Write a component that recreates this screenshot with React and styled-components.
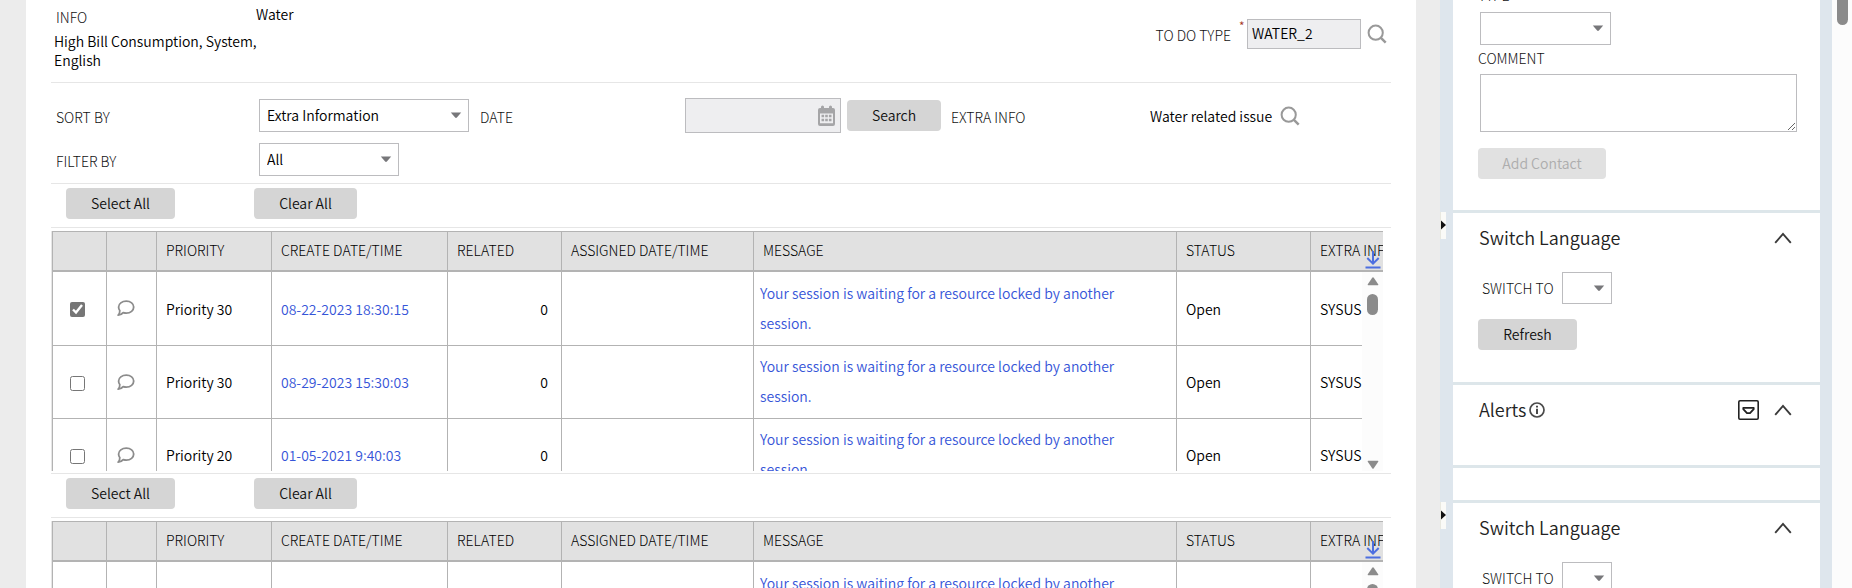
import React, { useId, useState } from "react";
import styled, { createGlobalStyle } from "styled-components";

const GlobalStyle = createGlobalStyle`
  *, *::before, *::after { box-sizing: border-box; }
  html, body { margin: 0; height: 100%; overflow: hidden; }
  body, button, input, select, textarea {
    font-family: "Noto Sans CJK SC", "Noto Sans", sans-serif;
    font-size: 14px;
    font-weight: 350;
    line-height: 20px;
    color: #000;
  }
`;

const Page = styled.div`
  display: flex;
  height: 100vh;
  overflow: hidden;
  background: #ececec;
`;

const Main = styled.main`
  flex: 1;
  min-width: 0;
  height: 100%;
  margin: 0 24px 0 26px;
  padding: 0 25px;
  overflow: hidden;
  background: #fff;
`;

const SummaryBar = styled.section`
  display: flex;
  align-items: flex-start;
  height: 83px;
  border-bottom: 1px solid #e6e6e6;
`;

const InfoBlock = styled.div`
  width: 205px;
  padding: 5px 0 0 3px;
`;

const InfoText = styled.p`
  width: 210px;
  margin: 5px 0 0;
  line-height: 19px;
`;

const SummaryValue = styled.span`
  padding-top: 4px;
`;

const TypeField = styled.div`
  display: flex;
  align-items: center;
  margin: 19px 4px 0 auto;
`;

const Label = styled.label`
  display: block;
  padding: ${(p) => p.$pad || "0"};
  font-weight: 300;
  color: #111;
  white-space: nowrap;
`;

const Required = styled.span`
  align-self: flex-start;
  width: 6px;
  margin: 0 2px 0 8px;
  font-size: 12px;
  line-height: 14px;
  color: #a3341b;
`;

const TextInput = styled.input`
  width: ${(p) => p.$width};
  height: ${(p) => p.$height};
  padding: 0 4px 2px;
  border: 1px solid #bcbcbf;
  border-radius: 0;
  background: #eeeef0;
  outline: none;
`;

const IconButton = styled.button`
  display: inline-flex;
  align-items: center;
  justify-content: center;
  margin: ${(p) => p.$margin || "0"};
  padding: 0;
  border: 0;
  background: none;
  line-height: 0;
  cursor: pointer;
`;

const FilterGrid = styled.form`
  display: grid;
  grid-template-columns: 208fr 221fr 205fr 266fr 199fr 241fr;
  align-items: center;
  row-gap: 10px;
  padding: 15px 0 7px;
  border-bottom: 1px solid #e6e6e6;
`;

const Inline = styled.div`
  display: flex;
  align-items: center;
  gap: ${(p) => p.$gap || "6px"};
`;

const Stack = styled.span`
  display: inline-grid;
  align-items: center;
  width: ${(p) => p.$width};
  & > * { grid-area: 1 / 1; }
  & > svg, & > button {
    justify-self: end;
    margin-right: ${(p) => p.$inset || "7px"};
  }
  & > svg { pointer-events: none; }
`;

const Select = styled.select`
  width: 100%;
  height: ${(p) => p.$height || "33px"};
  padding: 0 24px 2px 7px;
  appearance: none;
  border: 1px solid #bcbcbf;
  border-radius: 0;
  background: #fff;
  outline: none;
`;

const Button = styled.button`
  height: 31px;
  width: ${(p) => p.$width};
  padding: 0 0 2px;
  border: 0;
  border-radius: 4px;
  background: #d5d5d5;
  color: #111;
  cursor: pointer;
  &:disabled {
    background: #e1e1e1;
    color: #adadad;
    cursor: default;
  }
`;

const WorkSection = styled.section`
  padding-bottom: 2px;
  border-bottom: 1px solid #e6e6e6;
`;

const Toolbar = styled.div`
  display: flex;
  gap: 79px;
  padding: 4px 15px 8px;
  border-bottom: 1px solid #e6e6e6;
`;

const GridFrame = styled.div`
  position: relative;
  height: 240px;
  margin: 3px 8px 0 0;
  border-left: 1px solid #e6e6e6;
  overflow: hidden;
`;

const Table = styled.table`
  width: 100%;
  table-layout: fixed;
  border-collapse: separate;
  border-spacing: 0;
  border-left: 1px solid #b3b3b3;
`;

const Col = styled.col`
  width: ${(p) => p.$width};
`;

const Th = styled.th`
  height: 41px;
  padding: 0 0 2px 9px;
  border-top: 1px solid #b3b3b3;
  border-bottom: 2px solid #b3b3b3;
  border-right: 1px solid #b3b3b3;
  background: #e1e1e1;
  font-weight: 300;
  text-align: left;
  color: #000;
  white-space: nowrap;
  overflow: hidden;
  &:last-child { border-right: 0; }
`;

const Td = styled.td`
  height: 73px;
  padding: ${(p) => p.$pad || "0 0 0 9px"};
  border-right: 1px solid #b3b3b3;
  text-align: ${(p) => p.$align || "left"};
  line-height: ${(p) => p.$leading || "20px"};
  overflow: hidden;
  tr + tr > & { border-top: 1px solid #b3b3b3; }
  &:last-child { border-right: 0; }
`;

const Link = styled.a`
  color: #3655d8;
  text-decoration: none;
`;

const Checkbox = styled.input`
  display: block;
  width: 15px;
  height: 15px;
  margin: 2px auto 0;
  accent-color: #767676;
`;

const DownloadSlot = styled.div`
  position: absolute;
  top: 20px;
  right: 2px;
`;

const ScrollTrack = styled.div`
  position: absolute;
  top: 41px;
  right: 0;
  bottom: 0;
  display: flex;
  flex-direction: column;
  align-items: center;
  width: 21px;
  padding: 4px 0 1px;
  background: #fcfcfc;
`;

const ScrollThumb = styled.div`
  width: 11px;
  height: ${(p) => p.$height};
  margin-top: ${(p) => p.$top || "0"};
  margin-bottom: auto;
  border-radius: ${(p) => p.$radius || "6px"};
  background: #8b8b8b;
`;

const Rail = styled.div`
  flex: none;
  width: 13px;
  height: 100%;
  padding-top: 212px;
  background: #dee6ed;
  overflow: hidden;
`;

const RailHandle = styled.button`
  display: flex;
  align-items: center;
  width: 6px;
  height: 27px;
  margin: 0 0 263px;
  padding: 0 0 2px;
  border: 0;
  border-left: 1px solid #e8e8e0;
  background: #fafaf7;
  cursor: pointer;
`;

const Sidebar = styled.aside`
  display: flex;
  flex: none;
  flex-direction: column;
  gap: 3px;
  width: 379px;
  height: 100%;
  padding-right: 12px;
  overflow: hidden;
  background: linear-gradient(to left, #dee6ed 12px, #dde6ea 12px);
`;

const Card = styled.section`
  flex: none;
  height: ${(p) => p.$height};
  padding: ${(p) => p.$pad || "0 25px"};
  background: #fff;
  overflow: hidden;
`;

const CardHead = styled.header`
  display: flex;
  align-items: center;
  gap: 3px;
  height: 28px;
  margin-bottom: 20px;
  padding: 0 3px 0 1px;
`;

const CardTitle = styled.h2`
  margin: 0;
  padding-bottom: 2px;
  font-size: 18px;
  font-weight: 350;
  line-height: 26px;
  color: #222;
`;

const HeadActions = styled.div`
  display: flex;
  align-items: center;
  gap: 15px;
  margin-left: auto;
`;

const CommentBox = styled.textarea`
  display: block;
  width: calc(100% - 2px);
  height: 58px;
  margin: 6px 0 16px 2px;
  border: 1px solid #bcbcbf;
  border-radius: 0;
  background: #fff;
  outline: none;
`;

const ContactForm = styled.div`
  margin-top: -15px;
`;

const SelectLine = styled.div`
  padding: ${(p) => p.$pad};
  & > span { vertical-align: top; }
`;

const PageScroll = styled.div`
  display: flex;
  flex: none;
  align-items: flex-start;
  width: 20px;
  height: 100%;
  padding-left: 5px;
  background: #fcfcfc;
`;

const Arrow = () => (
  <svg width="12" height="7" viewBox="0 0 12 7" aria-hidden="true">
    <path d="M0.8 0.5H11.2L6.9 5.6Q6 6.5 5.1 5.6Z" fill="#77777a" />
  </svg>
);

const SearchIcon = () => (
  <svg width="20" height="20" viewBox="0 0 20 20" fill="none" stroke="#999" aria-hidden="true">
    <circle cx="8.7" cy="8.7" r="7.1" strokeWidth="2" />
    <path d="M13.7 13.7L18.7 18.7" strokeWidth="2.5" />
  </svg>
);

const CalendarIcon = () => (
  <svg width="19" height="22" viewBox="0 0 19 22" aria-hidden="true">
    <path
      d="M3 3H16Q18 3 18 5V19Q18 21 16 21H3Q1 21 1 19V5Q1 3 3 3ZM3 8.5V18.3H16V8.5Z"
      fill="#a5a5a7"
      fillRule="evenodd"
    />
    <rect x="4" y="0.5" width="3" height="4.5" rx="1.5" fill="#a5a5a7" />
    <rect x="12" y="0.5" width="3" height="4.5" rx="1.5" fill="#a5a5a7" />
    <path d="M4.5 11h2.6M8.2 11h2.6M11.9 11h2.6M4.5 15h2.6M8.2 15h2.6M11.9 15h2.6" stroke="#a5a5a7" strokeWidth="2.6" />
  </svg>
);

const CommentIcon = () => (
  <svg width="18" height="17" viewBox="0 0 18 17" fill="none" stroke="#8c8c8c" strokeWidth="1.8" aria-hidden="true">
    <path
      d="M9.3 1.2C13.6 1.2 16.7 3.7 16.7 7.1C16.7 10.5 13.6 13.1 9.3 13.1C8.2 13.1 7.2 12.9 6.2 12.6C4.9 14.2 3.3 15 1.2 15.1C2.3 14 2.9 12.7 2.8 10.6C1.9 9.6 1.6 8.4 1.6 7.1C1.6 3.7 5 1.2 9.3 1.2Z"
      strokeLinejoin="round"
    />
  </svg>
);

const DownloadIcon = () => (
  <svg width="16" height="18" viewBox="0 0 16 18" fill="none" stroke="#4d6fe0" strokeWidth="2" aria-hidden="true">
    <path d="M8 0V12.5M2.3 7L8 12.7L13.7 7M0.5 16.5H15.5" />
  </svg>
);

const Triangle = ({ down }) => (
  <svg width="12" height="10" viewBox="0 0 12 10" aria-hidden="true">
    <path
      d={down ? "M1.3 0.7H10.7Q11.8 0.7 11.2 1.7L6.8 8.2Q6 9.2 5.2 8.2L0.8 1.7Q0.2 0.7 1.3 0.7Z" : "M1.3 9.3H10.7Q11.8 9.3 11.2 8.3L6.8 1.8Q6 0.8 5.2 1.8L0.8 8.3Q0.2 9.3 1.3 9.3Z"}
      fill="#8b8b8b"
    />
  </svg>
);

const ChevronUp = () => (
  <svg width="18" height="12" viewBox="0 0 18 12" fill="none" stroke="#3a3a3a" strokeWidth="1.9" aria-hidden="true">
    <path d="M1.2 10.8L9 1.9L16.8 10.8" />
  </svg>
);

const InfoIcon = () => (
  <svg width="16" height="16" viewBox="0 0 16 16" fill="none" stroke="#4a4a4a" aria-hidden="true">
    <circle cx="8" cy="8" r="7" strokeWidth="1.7" />
    <path d="M8 6.7V12M8 3.8V5.5" strokeWidth="2" />
  </svg>
);

const MenuIcon = () => (
  <svg width="21" height="20" viewBox="0 0 21 20" fill="none" stroke="#222" aria-hidden="true">
    <rect x="0.8" y="0.8" width="19.4" height="18.4" rx="1.2" strokeWidth="1.6" />
    <path d="M5.3 7.8H15.7V9.2L12 13.2H9L5.3 9.2Z" strokeWidth="1.8" strokeLinejoin="round" />
  </svg>
);

const HandleArrow = () => (
  <svg width="5" height="10" viewBox="0 0 5 10" aria-hidden="true">
    <path d="M0 0.5L5 5L0 9.5Z" fill="#111" />
  </svg>
);

const SelectBox = ({ width, height, id, label, options }) => (
  <Stack $width={width}>
    <Select id={id} aria-label={label} $height={height}>
      {options.map((o) => (
        <option key={o}>{o}</option>
      ))}
    </Select>
    <Arrow />
  </Stack>
);

const COLUMNS = [
  { key: "select", title: "", width: "54px" },
  { key: "notes", title: "", width: "50px" },
  { key: "priority", title: "PRIORITY", width: "115px" },
  { key: "created", title: "CREATE DATE/TIME", width: "176px" },
  { key: "related", title: "RELATED", width: "114px" },
  { key: "assigned", title: "ASSIGNED DATE/TIME", width: "192px" },
  { key: "message", title: "MESSAGE", width: "auto" },
  { key: "status", title: "STATUS", width: "134px" },
  { key: "extra", title: "EXTRA INFO", width: "72px" },
];

const MESSAGE = "Your session is waiting for a resource locked by another session.";

const ROWS = [
  { priority: "Priority 30", created: "08-22-2023 18:30:15", checked: true },
  { priority: "Priority 30", created: "08-29-2023 15:30:03", checked: false },
  { priority: "Priority 20", created: "01-05-2021 9:40:03", checked: false },
];

function WorkList() {
  const [checked, setChecked] = useState(ROWS.map((r) => r.checked));
  const setAll = (value) => setChecked(ROWS.map(() => value));
  return (
    <WorkSection>
      <Toolbar>
        <Button type="button" $width="109px" onClick={() => setAll(true)}>Select All</Button>
        <Button type="button" $width="103px" onClick={() => setAll(false)}>Clear All</Button>
      </Toolbar>
      <GridFrame>
        <Table>
          <colgroup>
            {COLUMNS.map((c) => (
              <Col key={c.key} $width={c.width} />
            ))}
          </colgroup>
          <thead>
            <tr>
              {COLUMNS.map((c) => (
                <Th key={c.key} scope="col">{c.title}</Th>
              ))}
            </tr>
          </thead>
          <tbody>
            {ROWS.map((r, i) => (
              <tr key={r.created}>
                <Td $pad="0 4px 0 0">
                  <Checkbox
                    type="checkbox"
                    aria-label={`Select ${r.created}`}
                    checked={checked[i]}
                    onChange={() => setChecked(checked.map((c, n) => (n === i ? !c : c)))}
                  />
                </Td>
                <Td $pad="4px 0 0 10px">
                  <IconButton type="button" aria-label="Comments"><CommentIcon /></IconButton>
                </Td>
                <Td>{r.priority}</Td>
                <Td><Link href="#">{r.created}</Link></Td>
                <Td $align="right" $pad="0 13px 0 0">0</Td>
                <Td />
                <Td $pad="0 20px 2px 6px" $leading="30px"><Link href="#">{MESSAGE}</Link></Td>
                <Td>Open</Td>
                <Td>SYSUSER</Td>
              </tr>
            ))}
          </tbody>
        </Table>
        <DownloadSlot>
          <IconButton type="button" aria-label="Download"><DownloadIcon /></IconButton>
        </DownloadSlot>
        <ScrollTrack>
          <Triangle />
          <ScrollThumb $height="21px" $top="8px" />
          <Triangle down />
        </ScrollTrack>
      </GridFrame>
    </WorkSection>
  );
}

function SwitchLanguage() {
  const id = useId();
  return (
    <Card $height="169px" $pad="11px 25px 0">
      <CardHead>
        <CardTitle>Switch Language</CardTitle>
        <HeadActions>
          <IconButton type="button" aria-label="Collapse"><ChevronUp /></IconButton>
        </HeadActions>
      </CardHead>
      <SelectLine $pad="0 0 15px 4px">
        <Inline $gap="8px">
          <Label htmlFor={id}>SWITCH TO</Label>
          <SelectBox id={id} width="50px" height="32px" options={[""]} />
        </Inline>
      </SelectLine>
      <Button type="button" $width="99px">Refresh</Button>
    </Card>
  );
}

export default function App() {
  return (
    <>
      <GlobalStyle />
      <Page>
        <Main>
          <SummaryBar>
            <InfoBlock>
              <Label as="div" $pad="2px 0 0 2px">INFO</Label>
              <InfoText>High Bill Consumption, System, English</InfoText>
            </InfoBlock>
            <SummaryValue>Water</SummaryValue>
            <TypeField>
              <Label htmlFor="todo-type" $pad="2px 0 0">TO DO TYPE</Label>
              <Required>*</Required>
              <TextInput id="todo-type" $width="114px" $height="30px" defaultValue="WATER_2" />
              <IconButton type="button" aria-label="Find type" $margin="0 0 0 6px"><SearchIcon /></IconButton>
            </TypeField>
          </SummaryBar>

          <FilterGrid onSubmit={(e) => e.preventDefault()}>
            <Label htmlFor="sort-by" $pad="2px 0 0 5px">SORT BY</Label>
            <SelectBox id="sort-by" width="210px" options={["Extra Information"]} />
            <Label htmlFor="date" $pad="2px 0 0">DATE</Label>
            <Inline>
              <Stack $width="156px" $inset="5px">
                <TextInput id="date" $width="156px" $height="35px" />
                <IconButton type="button" aria-label="Pick a date"><CalendarIcon /></IconButton>
              </Stack>
              <Button type="submit" $width="94px">Search</Button>
            </Inline>
            <Label as="div" $pad="2px 0 0">EXTRA INFO</Label>
            <Inline $gap="8px">
              <span>Water related issue</span>
              <IconButton type="button" aria-label="Find issue"><SearchIcon /></IconButton>
            </Inline>
            <Label htmlFor="filter-by" $pad="2px 0 0 5px">FILTER BY</Label>
            <SelectBox id="filter-by" width="140px" options={["All"]} />
          </FilterGrid>

          <WorkList />
          <WorkList />
        </Main>

        <Rail>
          <RailHandle type="button" aria-label="Collapse panel"><HandleArrow /></RailHandle>
          <RailHandle type="button" aria-label="Collapse panel"><HandleArrow /></RailHandle>
        </Rail>

        <Sidebar>
          <Card $height="210px" $pad="0 23px 0 25px">
            <ContactForm>
              <Label htmlFor="contact-type">TYPE</Label>
              <SelectLine $pad="7px 0 3px 2px">
                <SelectBox id="contact-type" width="131px" options={[""]} />
              </SelectLine>
              <Label htmlFor="comment">COMMENT</Label>
              <CommentBox id="comment" />
              <Button type="button" $width="128px" disabled>Add Contact</Button>
            </ContactForm>
          </Card>
          <SwitchLanguage />
          <Card $height="80px" $pad="11px 25px 0">
            <CardHead>
              <CardTitle>Alerts</CardTitle>
              <InfoIcon />
              <HeadActions>
                <IconButton type="button" aria-label="Alert menu"><MenuIcon /></IconButton>
                <IconButton type="button" aria-label="Collapse"><ChevronUp /></IconButton>
              </HeadActions>
            </CardHead>
          </Card>
          <Card $height="32px" />
          <SwitchLanguage />
        </Sidebar>

        <PageScroll>
          <ScrollThumb $height="25px" $radius="0 0 6px 6px" />
        </PageScroll>
      </Page>
    </>
  );
}
